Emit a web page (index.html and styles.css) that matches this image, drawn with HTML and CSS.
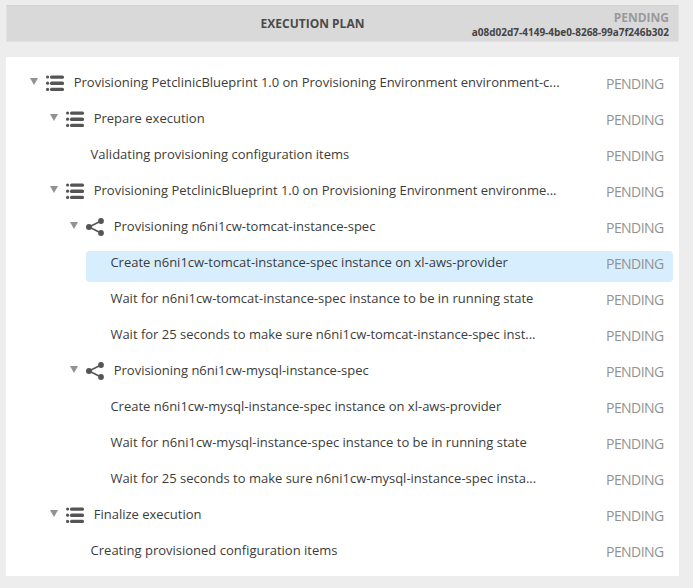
FILE: index.html
```
<!DOCTYPE html>
<html lang="en">
<head>
<meta charset="utf-8">
<title>Execution plan</title>
<link rel="stylesheet" href="styles.css">
</head>
<body>
<svg class="defs" width="0" height="0">
  <symbol id="list" viewBox="0 0 18 16">
    <g fill="#555"><circle cx="1.6" cy="2" r="1.6"/><circle cx="1.6" cy="8.2" r="1.6"/><circle cx="1.6" cy="14.4" r="1.6"/>
    <rect x="4" y="0.4" width="14" height="3.3" rx="1.5"/><rect x="4" y="6.6" width="14" height="3.3" rx="1.5"/><rect x="4" y="12.7" width="14" height="3.3" rx="1.5"/></g>
  </symbol>
  <symbol id="share" viewBox="0 0 18 18">
    <path d="M15 3 3 9l12 6" fill="none" stroke="#555" stroke-width="1.6"/>
    <g fill="#555"><circle cx="15" cy="3" r="2.9"/><circle cx="3" cy="9" r="3"/><circle cx="15" cy="15" r="2.9"/></g>
  </symbol>
</svg>
<header class="header">
  <h1 class="title">EXECUTION PLAN</h1>
  <div class="summary"><div class="state">PENDING</div><div class="task-id">a08d02d7-4149-4be0-8268-99a7f246b302</div></div>
</header>
<main class="plan">
  <div class="row level-0"><i class="arrow"></i><svg class="icon list"><use href="#list"/></svg><span class="label">Provisioning PetclinicBlueprint 1.0 on Provisioning Environment environment-c...</span><span class="status">PENDING</span></div>
  <div class="row level-1"><i class="arrow"></i><svg class="icon list"><use href="#list"/></svg><span class="label">Prepare execution</span><span class="status">PENDING</span></div>
  <div class="row step-2"><span class="label">Validating provisioning configuration items</span><span class="status">PENDING</span></div>
  <div class="row level-1"><i class="arrow"></i><svg class="icon list"><use href="#list"/></svg><span class="label">Provisioning PetclinicBlueprint 1.0 on Provisioning Environment environme...</span><span class="status">PENDING</span></div>
  <div class="row level-2"><i class="arrow"></i><svg class="icon share"><use href="#share"/></svg><span class="label">Provisioning n6ni1cw-tomcat-instance-spec</span><span class="status">PENDING</span></div>
  <div class="row step-3 selected"><span class="label">Create n6ni1cw-tomcat-instance-spec instance on xl-aws-provider</span><span class="status">PENDING</span></div>
  <div class="row step-3"><span class="label">Wait for n6ni1cw-tomcat-instance-spec instance to be in running state</span><span class="status">PENDING</span></div>
  <div class="row step-3"><span class="label">Wait for 25 seconds to make sure n6ni1cw-tomcat-instance-spec inst...</span><span class="status">PENDING</span></div>
  <div class="row level-2"><i class="arrow"></i><svg class="icon share"><use href="#share"/></svg><span class="label">Provisioning n6ni1cw-mysql-instance-spec</span><span class="status">PENDING</span></div>
  <div class="row step-3"><span class="label">Create n6ni1cw-mysql-instance-spec instance on xl-aws-provider</span><span class="status">PENDING</span></div>
  <div class="row step-3"><span class="label">Wait for n6ni1cw-mysql-instance-spec instance to be in running state</span><span class="status">PENDING</span></div>
  <div class="row step-3"><span class="label">Wait for 25 seconds to make sure n6ni1cw-mysql-instance-spec insta...</span><span class="status">PENDING</span></div>
  <div class="row level-1"><i class="arrow"></i><svg class="icon list"><use href="#list"/></svg><span class="label">Finalize execution</span><span class="status">PENDING</span></div>
  <div class="row step-2"><span class="label">Creating provisioned configuration items</span><span class="status">PENDING</span></div>
</main>
</body>
</html>
```
FILE: styles.css
```
* { box-sizing: border-box; }
body {
  margin: 0;
  padding: 5px 14px 12px 6px;
  height: 588px;
  background: #ededed;
  color: #3c3c3c;
  font-family: "Open Sans", sans-serif;
  font-size: 13px;
  overflow: hidden;
}
.defs { display: block; }
.header {
  display: grid;
  grid-template-columns: 205px 1fr 205px;
  height: 37px;
  padding: 0 9px;
  background: #d9d9d9;
  border: 1px solid #e1e1e1;
  border-top-color: #d3d3d3;
}
.title {
  grid-column: 2;
  margin: 0;
  padding-right: 60px;
  text-align: center;
  font-size: 12px;
  line-height: 35px;
  font-weight: 700;
  color: #4a4a4a;
  white-space: nowrap;
}
.summary { text-align: right; font-weight: 700; white-space: nowrap; }
.state { padding-top: 4px; font-size: 12px; line-height: 15px; color: #999; }
.task-id { font-size: 10px; line-height: 14px; color: #444; }
.plan {
  display: flex;
  flex-direction: column;
  gap: 5px;
  width: 673px;
  height: 519px;
  margin-top: 15px;
  padding: 14px 6px 0 20px;
  background: #fff;
}
.row {
  display: flex;
  flex: none;
  height: 31px;
  padding-right: 9.3px;
  border-radius: 4px;
}
.level-0 { margin-left: 0; }
.level-1 { margin-left: 20px; }
.level-2 { margin-left: 40px; }
.step-2 { margin-left: 40px; padding-left: 24.6px; }
.step-3 { margin-left: 60px; padding-left: 24.4px; }
.selected { background: #d7eeff; }
.arrow {
  flex: none;
  width: 8px;
  height: 7px;
  margin: 7px 8px 0 4px;
  background: #929292;
  clip-path: polygon(0 0, 100% 0, 50% 100%);
}
.icon { flex: none; width: 18px; margin-right: 9.7px; }
.list { height: 16px; margin-top: 4px; }
.share { height: 18px; margin-top: 3px; }
.label { line-height: 23px; white-space: pre; }
.status {
  margin-left: auto;
  font-size: 14px;
  line-height: 26px;
  letter-spacing: -0.55px;
  color: #929292;
}
```
